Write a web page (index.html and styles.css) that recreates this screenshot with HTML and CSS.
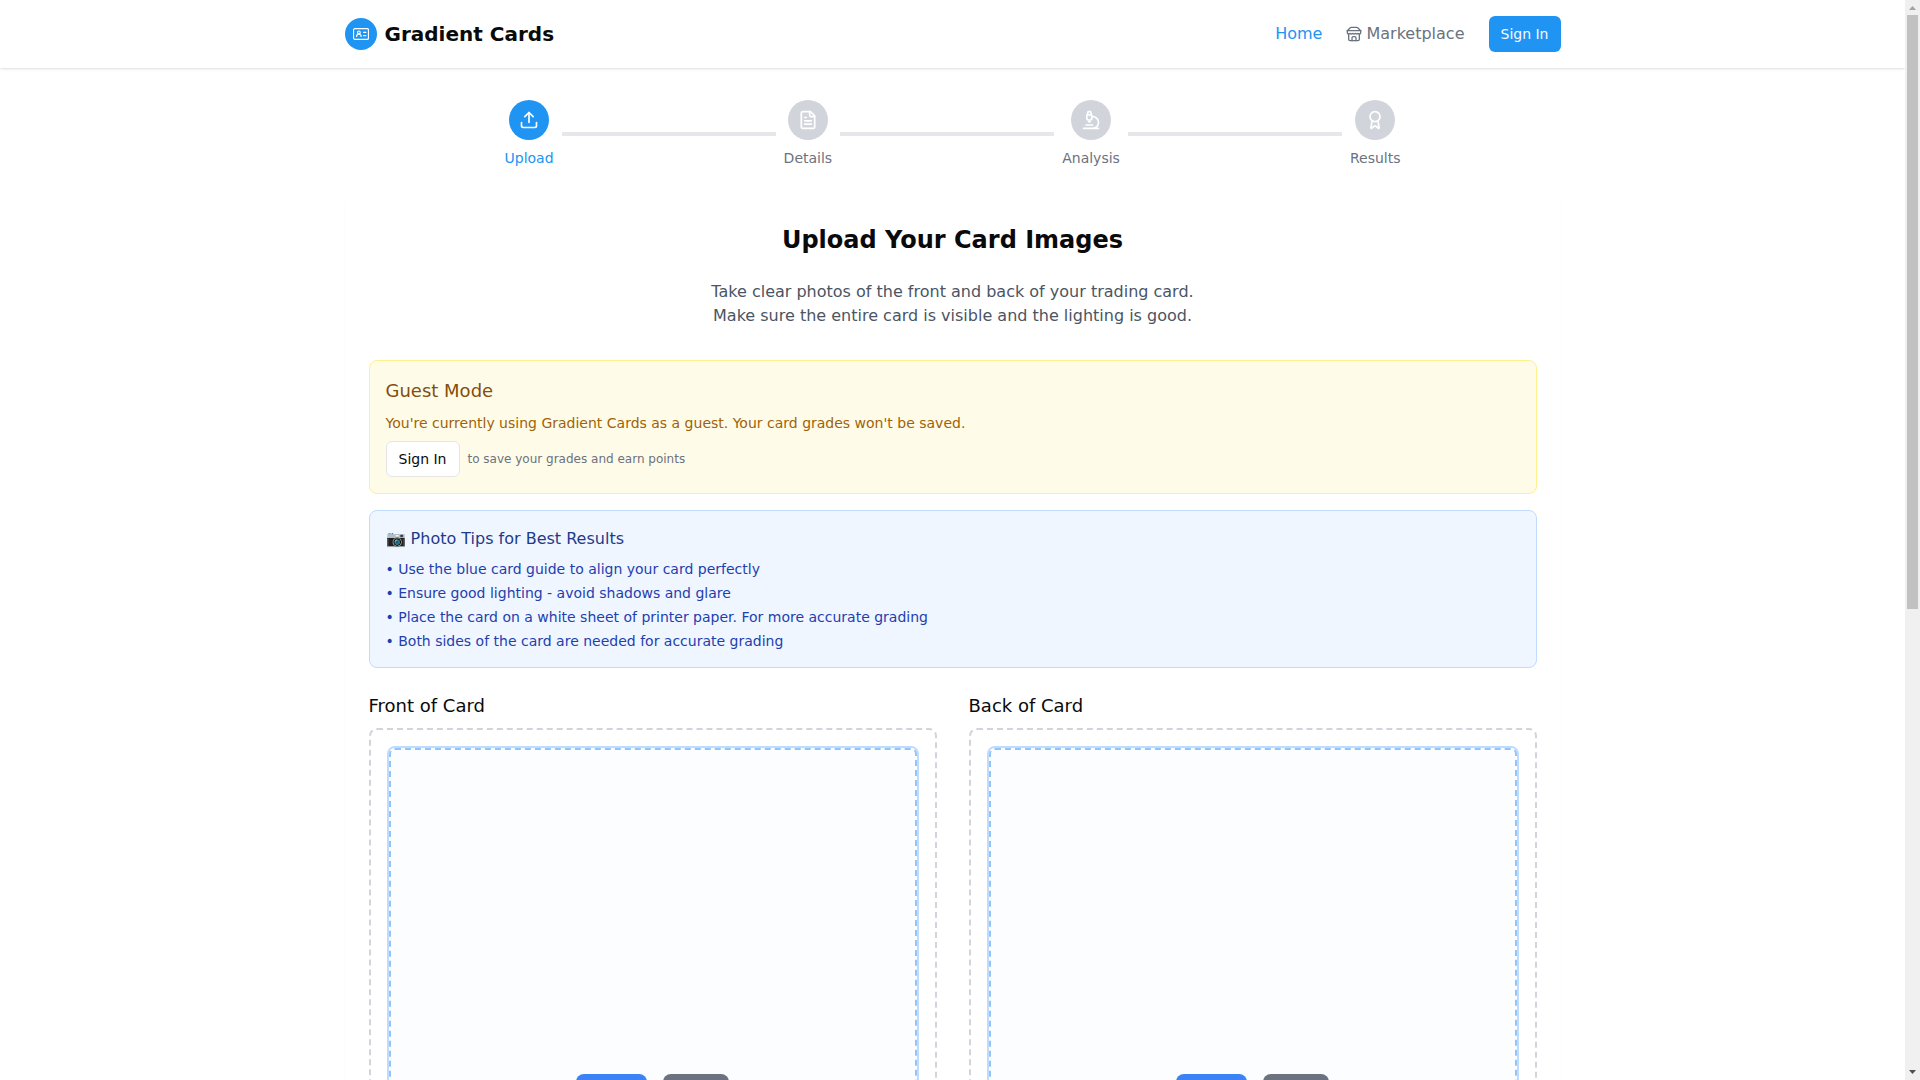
FILE: index.html
```html
<!DOCTYPE html>
<html lang="en">
<head>
<meta charset="utf-8">
<meta name="viewport" content="width=device-width, initial-scale=1">
<title>Gradient Cards</title>
<link rel="stylesheet" href="styles.css">
</head>
<body>
<div class="window">
<div class="page">
  <header class="header">
    <div class="container header-row">
      <a class="brand" href="#">
        <span class="brand-mark">
          <svg class="icon-16" viewBox="0 0 15 15" fill="none" stroke="currentColor" stroke-width="1.1" aria-hidden="true">
            <rect x=".5" y="2.5" width="14" height="10" rx="1.2"/>
            <circle cx="5.500" cy="6" r="1.300"/>
            <path d="M3.400 10.200V9.600c0-1.200.8-1.900 2.100-1.900s2.100.7 2.100 1.900v.6M9.500 6h3M9.500 9h3"/>
          </svg>
        </span>
        <span class="brand-name">Gradient Cards</span>
      </a>
      <nav class="nav">
        <a class="nav-link active" href="#">Home</a>
        <a class="nav-link" href="#">
          <svg class="icon-16 stroke" viewBox="0 0 24 24" aria-hidden="true"><path d="m2 7 4.41-4.41A2 2 0 0 1 7.83 2h8.34a2 2 0 0 1 1.42.59L22 7"/><path d="M4 12v8a2 2 0 0 0 2 2h12a2 2 0 0 0 2-2v-8"/><path d="M15 22v-4a2 2 0 0 0-2-2h-2a2 2 0 0 0-2 2v4"/><path d="M2 7h20"/><path d="M22 7v3a2 2 0 0 1-2 2a2.700 2.700 0 0 1-1.590-.630.700.700 0 0 0-.820 0A2.700 2.700 0 0 1 16 12a2.700 2.700 0 0 1-1.590-.630.700.700 0 0 0-.820 0A2.700 2.700 0 0 1 12 12a2.700 2.700 0 0 1-1.590-.630.700.700 0 0 0-.820 0A2.700 2.700 0 0 1 8 12a2.700 2.700 0 0 1-1.590-.630.700.700 0 0 0-.820 0A2.700 2.700 0 0 1 4 12a2 2 0 0 1-2-2V7"/></svg>
          Marketplace
        </a>
        <button class="btn btn-primary" type="button">Sign In</button>
      </nav>
    </div>
  </header>

  <main class="container main">
    <ol class="steps">
      <li class="step current">
        <span class="step-dot"><svg class="icon-20 stroke" viewBox="0 0 24 24" aria-hidden="true"><path d="M21 15v4a2 2 0 0 1-2 2H5a2 2 0 0 1-2-2v-4"/><path d="m17 8-5-5-5 5"/><path d="M12 3v12"/></svg></span>
        <span>Upload</span>
      </li>
      <li class="step-line" role="presentation"></li>
      <li class="step">
        <span class="step-dot"><svg class="icon-20 stroke" viewBox="0 0 24 24" aria-hidden="true"><path d="M15 2H6a2 2 0 0 0-2 2v16a2 2 0 0 0 2 2h12a2 2 0 0 0 2-2V7Z"/><path d="M14 2v4a2 2 0 0 0 2 2h4"/><path d="M10 9H8M16 13H8M16 17H8"/></svg></span>
        <span>Details</span>
      </li>
      <li class="step-line" role="presentation"></li>
      <li class="step">
        <span class="step-dot"><svg class="icon-20 stroke" viewBox="0 0 24 24" aria-hidden="true"><path d="M6 18h8M3 22h18M14 22a7 7 0 1 0 0-14h-1M9 14h2"/><path d="M9 12a2 2 0 0 1-2-2V6h6v4a2 2 0 0 1-2 2Z"/><path d="M12 6V3a1 1 0 0 0-1-1H9a1 1 0 0 0-1 1v3"/></svg></span>
        <span>Analysis</span>
      </li>
      <li class="step-line" role="presentation"></li>
      <li class="step">
        <span class="step-dot"><svg class="icon-20 stroke" viewBox="0 0 24 24" aria-hidden="true"><path d="m15.477 12.890 1.515 8.526a.5.5 0 0 1-.810.470l-3.580-2.687a1 1 0 0 0-1.197 0l-3.586 2.686a.5.5 0 0 1-.810-.469l1.514-8.526"/><circle cx="12" cy="8" r="6"/></svg></span>
        <span>Results</span>
      </li>
    </ol>

    <section class="panel">
      <h1 class="panel-title">Upload Your Card Images</h1>
      <p class="panel-intro">Take clear photos of the front and back of your trading card.<br>Make sure the entire card is visible and the lighting is good.</p>

      <div class="notice notice-guest">
        <h2 class="guest-title">Guest Mode</h2>
        <p class="guest-text">You're currently using Gradient Cards as a guest. Your card grades won't be saved.</p>
        <div class="guest-action">
          <button class="btn btn-outline" type="button">Sign In</button>
          <span class="guest-hint">to save your grades and earn points</span>
        </div>
      </div>

      <div class="notice notice-tips">
        <h2 class="tips-title">📷 Photo Tips for Best Results</h2>
        <ul class="tips-list">
          <li>• Use the blue card guide to align your card perfectly</li>
          <li>• Ensure good lighting - avoid shadows and glare</li>
          <li>• Place the card on a white sheet of printer paper. For more accurate grading</li>
          <li>• Both sides of the card are needed for accurate grading</li>
        </ul>
      </div>

      <div class="uploads">
        <section>
          <h2 class="upload-title">Front of Card</h2>
          <div class="dropzone">
            <div class="frame"><div class="guide">
              <button class="pick pick-camera" type="button" aria-label="Take photo of the front"></button>
              <button class="pick pick-file" type="button" aria-label="Choose file for the front"></button>
            </div></div>
          </div>
        </section>
        <section>
          <h2 class="upload-title">Back of Card</h2>
          <div class="dropzone">
            <div class="frame"><div class="guide">
              <button class="pick pick-camera" type="button" aria-label="Take photo of the back"></button>
              <button class="pick pick-file" type="button" aria-label="Choose file for the back"></button>
            </div></div>
          </div>
        </section>
      </div>
    </section>
  </main>
</div>
<div class="scrollbar" aria-hidden="true">
  <svg class="scroll-arrow" viewBox="0 0 15 15"><path d="M4 10l3.500-4L11 10z" fill="#a3a3a3"/></svg>
  <div class="scroll-track"><div class="scroll-thumb"></div></div>
  <svg class="scroll-arrow" viewBox="0 0 15 15"><path d="M4 5h7l-3.500 4z" fill="#505050"/></svg>
</div>
</div>
</body>
</html>
```
FILE: styles.css
```css
*, *::before, *::after { box-sizing: border-box; }
body, h1, h2, p, ol, ul { margin: 0; padding: 0; }
ol, ul { list-style: none; }
body {
  font: 16px/24px "DejaVu Sans", sans-serif;
  color: #0a0a0a;
  background: #fff;
}
a { color: inherit; text-decoration: none; }
h1, h2 { font-weight: 400; }

.window { display: flex; height: 100vh; }
.page {
  flex: 1;
  min-width: 0;
  overflow-y: auto;
  scrollbar-width: none;
}
.scrollbar {
  display: flex;
  flex-direction: column;
  flex: none;
  width: 15px;
  background: #f0f0f0;
}
.scroll-arrow { width: 15px; height: 15px; flex: none; }
.scroll-track { flex: 1; padding: 0 2px; }
.scroll-thumb { height: 56.6%; background: #c1c1c1; }

.container { max-width: 1280px; margin: 0 auto; padding: 0 32px; }
.icon-16 { width: 16px; height: 16px; flex: none; }
.icon-20 { width: 20px; height: 20px; flex: none; }
.stroke {
  fill: none;
  stroke: currentColor;
  stroke-width: 2;
  stroke-linecap: round;
  stroke-linejoin: round;
}

.header {
  background: #fff;
  box-shadow: 0 1px 3px rgb(0 0 0 / .1), 0 1px 2px -1px rgb(0 0 0 / .1);
}
.header-row {
  display: flex;
  align-items: center;
  justify-content: space-between;
  padding-block: 16px;
}
.brand { display: flex; align-items: center; gap: 8px; }
.brand-mark {
  display: grid;
  place-items: center;
  width: 32px;
  height: 32px;
  border-radius: 50%;
  background: #2094f3;
  color: #fff;
}
.brand-name { font-size: 20px; line-height: 28px; font-weight: 700; }
.nav { display: flex; align-items: center; gap: 24px; }
.nav-link { display: flex; align-items: center; gap: 4px; color: #6b7280; }
.nav-link.active { color: #2094f3; }

.btn {
  height: 36px;
  padding: 0 12px;
  border: 0;
  border-radius: 6px;
  font: 14px/20px "DejaVu Sans", sans-serif;
}
.btn-primary { background: #2094f3; color: #f8fafc; }
.btn-outline { background: #fff; color: #0a0a0a; border: 1px solid #e5e5e5; }

.main { padding-block: 32px; }
.steps {
  display: flex;
  align-items: center;
  max-width: 896px;
  margin: 0 auto 32px;
}
.step {
  display: flex;
  flex-direction: column;
  align-items: center;
  gap: 8px;
  font-size: 14px;
  line-height: 20px;
  color: #6b7280;
}
.step-dot {
  display: grid;
  place-items: center;
  width: 40px;
  height: 40px;
  border-radius: 50%;
  background: #d1d5db;
  color: #fff;
}
.step.current { color: #2094f3; }
.step.current .step-dot { background: #2094f3; color: #fff; }
.step-line { flex: 1; height: 4px; margin: 0 8px; background: #e5e7eb; }

.panel {
  padding: 24px;
  border-radius: 8px;
  background: #fff;
  box-shadow: 0 1px 2px rgb(0 0 0 / .05);
}
.panel-title {
  margin-bottom: 24px;
  font-size: 24px;
  line-height: 32px;
  font-weight: 700;
  text-align: center;
}
.panel-intro { margin-bottom: 32px; text-align: center; color: #4b5563; }

.notice { padding: 16px; border: 1px solid; border-radius: 8px; }
.notice-guest { margin-bottom: 16px; border-color: #fef08a; background: #fefce8; }
.guest-title { margin-bottom: 8px; font-size: 18px; line-height: 28px; color: #854d0e; }
.guest-text { margin-bottom: 8px; font-size: 14px; line-height: 20px; color: #a16207; }
.guest-action { display: flex; align-items: center; gap: 8px; }
.guest-hint { font-size: 12px; line-height: 16px; color: #6b7280; }
.notice-tips { margin-bottom: 24px; border-color: #bfdbfe; background: #eff6ff; }
.tips-title { margin-bottom: 8px; font-size: 16px; line-height: 24px; color: #1e3a8a; }
.tips-list { display: grid; gap: 4px; font-size: 14px; line-height: 20px; color: #1e40af; }

.uploads { display: grid; grid-template-columns: 1fr 1fr; gap: 32px; }
.upload-title { margin-bottom: 8px; font-size: 18px; line-height: 28px; }
.dropzone { padding: 16px; border: 2px dashed #d1d5db; border-radius: 8px; }
.frame { border: 2px solid #bfdbfe; border-radius: 8px; }
.guide {
  display: flex;
  align-items: flex-start;
  justify-content: center;
  gap: 16px;
  min-height: 1010px;
  padding-top: 324px;
  border: 2px dashed #93c5fd;
  border-radius: 6px;
  background: #fbfdff;
}
.pick { height: 40px; border: 0; border-radius: 8px; }
.pick-camera { width: 71px; background: #3b82f6; }
.pick-file { width: 66px; background: #6b7280; }
```
